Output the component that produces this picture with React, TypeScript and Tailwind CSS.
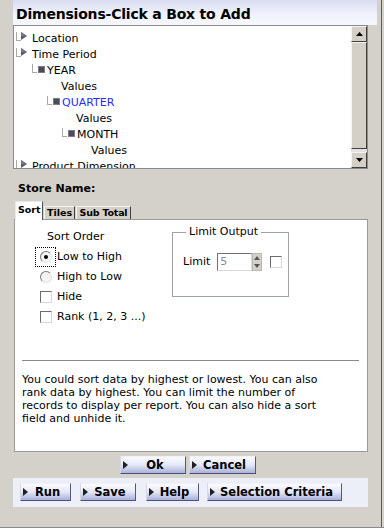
import type { ReactNode } from 'react';

type TreeRow = {
  text: string;
  pad: string;
  icon: 'tri' | 'sq' | 'none';
  blue?: boolean;
};

const rows: TreeRow[] = [
  { text: 'Location', pad: 'pl-[2px]', icon: 'tri' },
  { text: 'Time Period', pad: 'pl-[2px]', icon: 'tri' },
  { text: 'YEAR', pad: 'pl-[18px]', icon: 'sq' },
  { text: 'Values', pad: 'pl-[47px]', icon: 'none' },
  { text: 'QUARTER', pad: 'pl-[33px]', icon: 'sq', blue: true },
  { text: 'Values', pad: 'pl-[62px]', icon: 'none' },
  { text: 'MONTH', pad: 'pl-[48px]', icon: 'sq' },
  { text: 'Values', pad: 'pl-[77px]', icon: 'none' },
  { text: 'Product Dimension', pad: 'pl-[2px]', icon: 'tri' }
];

function Tri() {
  return (
    <svg width="7" height="8" viewBox="0 0 7 8" className="shrink-0">
      <polygon points="0,0 6,4 0,8" fill="#5c5c66" />
      <polygon points="0,0 6,4 0,4" fill="#7a7a86" />
    </svg>
  );
}

function Btn({ label, w }: { label: string; w: string }) {
  return (
    <div
      className={`${w} h-[18px] flex items-center bg-gradient-to-b from-[#fbfbff] via-[#e4e7f6] to-[#a9b1d8] border border-t-[#f0f0f8] border-l-[#d8d8e4] border-r-[#55587a] border-b-[#4a5080]`}
    >
      <svg width="6" height="8" viewBox="0 0 6 8" className="ml-[2px] shrink-0">
        <polygon points="0,0 5,4 0,8" fill="#202020" />
      </svg>
      <span className="flex-1 text-center text-[11.5px] font-bold leading-[16px] text-black pr-[4px]">
        {label}
      </span>
    </div>
  );
}

function Check() {
  return (
    <div className="w-[12px] h-[12px] shrink-0 bg-white border border-t-[#6b6b6b] border-l-[#6b6b6b] border-r-[#d6d6d6] border-b-[#d6d6d6]" />
  );
}

function Radio({ on }: { on?: boolean }) {
  return (
    <div className="w-[12px] h-[12px] shrink-0 rounded-full bg-[#f4f4f4] border border-t-[#7a7a7a] border-l-[#7a7a7a] border-r-[#e4e4e4] border-b-[#e4e4e4] flex items-center justify-center">
      {on && <div className="w-[4px] h-[4px] rounded-full bg-black" />}
    </div>
  );
}

function Option({ children }: { children: ReactNode }) {
  return <div className="h-[20px] flex items-center">{children}</div>;
}

function ScrollBtn({ up }: { up?: boolean }) {
  return (
    <div className="h-[16px] w-[16px] bg-[#d4d0c8] border border-t-[#f4f4f4] border-l-[#f4f4f4] border-r-[#404040] border-b-[#404040] flex items-center justify-center">
      <svg width="7" height="4" viewBox="0 0 7 4">
        {up ? <polygon points="3.5,0 7,4 0,4" fill="#000" /> : <polygon points="0,0 7,0 3.5,4" fill="#000" />}
      </svg>
    </div>
  );
}

export default function App() {
  return (
    <div className="w-[384px] h-[528px] bg-[#d3d1ca] flex overflow-hidden border-b border-[#8a8a8a] font-['DejaVu_Sans',Verdana,sans-serif] text-black">
      <div className="w-[381px] pl-[13px]">
        <div className="h-[25px] w-[364px] bg-gradient-to-b from-[#d8dcee] via-[#eef0fc] to-[#f6f7ff] pl-[3px] pt-[2px]">
          <span className="text-[14px] font-bold leading-[20px] tracking-[-0.2px]">
            Dimensions-Click a Box to Add
          </span>
        </div>

        <div className="w-[355px] h-[144px] bg-white border border-[#8c8c8c] flex">
          <div className="flex-1 pt-[5px] overflow-hidden">
            {rows.map((r, i) => (
              <div key={i} className={`h-[16px] flex items-center ${r.pad}`}>
                {r.icon !== 'none' && (
                  <div className="w-[5px] h-[9px] shrink-0 border-l border-b border-[#a8a8a8] self-start mt-[1px]" />
                )}
                {r.icon === 'tri' && (
                  <div className="self-start mt-[1px]">
                    <Tri />
                  </div>
                )}
                {r.icon === 'sq' && (
                  <div className="ml-[1px] w-[7px] h-[7px] bg-[#4c4c58] border border-[#7c7c88] shrink-0 -mt-[3px]" />
                )}
                <span
                  className={`text-[11px] leading-[16px] whitespace-nowrap ${
                    r.icon === 'tri' ? 'ml-[4px]' : r.icon === 'sq' ? 'ml-[2px]' : ''
                  } ${r.blue ? 'text-[#2a2aff]' : 'text-black'}`}
                >
                  {r.text}
                </span>
              </div>
            ))}
          </div>
          <div className="w-[16px] flex flex-col bg-[#e4e2dc]">
            <ScrollBtn up />
            <div className="h-[107px] bg-[#d4d0c8] border border-t-[#f4f4f4] border-l-[#f4f4f4] border-r-[#404040] border-b-[#404040]" />
            <div className="flex-1" />
            <ScrollBtn />
          </div>
        </div>

        <div className="mt-[13px] pl-[5px] h-[14px] text-[11px] font-bold leading-[14px]">Store Name:</div>

        <div className="mt-[5px] pl-[2px] h-[18px] flex items-end relative z-10">
          <div className="w-[28px] h-[19px] -mb-px bg-white border-t border-l border-r border-t-[#e8e8e8] border-l-[#e8e8e8] border-r-[#505050] pl-[2px] text-[9.5px] font-bold leading-[15px]">
            Sort
          </div>
          <div className="ml-px w-[31px] h-[13px] bg-[#d4d0c8] border-t border-l border-r border-t-[#f4f4f4] border-l-[#f4f4f4] border-r-[#404040] text-[9.5px] font-bold leading-[12px] text-center">
            Tiles
          </div>
          <div className="ml-px w-[55px] h-[13px] bg-[#d4d0c8] border-t border-l border-r border-t-[#f4f4f4] border-l-[#f4f4f4] border-r-[#404040] text-[9.5px] font-bold leading-[12px] text-center tracking-[-0.2px]">
            Sub Total
          </div>
        </div>

        <div className="ml-px w-[354px] h-[233px] bg-white border border-[#9a9a9a]">
          <div className="h-[140px] flex">
            <div className="w-[157px] pt-[7px] text-[11px]">
              <div className="h-[20px] flex items-center pl-[32px]">Sort Order</div>
              <Option>
                <div className="ml-[20px] w-[21px] h-[20px] border border-dotted border-black flex items-center justify-center">
                  <Radio on />
                </div>
                <span className="ml-px">Low to High</span>
              </Option>
              <Option>
                <div className="ml-[25px]">
                  <Radio />
                </div>
                <span className="ml-[5px]">High to Low</span>
              </Option>
              <Option>
                <div className="ml-[25px]">
                  <Check />
                </div>
                <span className="ml-[5px]">Hide</span>
              </Option>
              <Option>
                <div className="ml-[25px]">
                  <Check />
                </div>
                <span className="ml-[5px]">Rank (1, 2, 3 ...)</span>
              </Option>
            </div>

            <fieldset className="mt-[5px] w-[117px] h-[72px] border border-[#a0a4a0] text-[11px]">
              <legend className="ml-[13px] px-[3px] leading-[14px]">Limit Output</legend>
              <div className="mt-[14px] pl-[10px] flex items-center">
                <span>Limit</span>
                <div className="ml-[7px] w-[35px] h-[18px] border border-t-[#707070] border-l-[#707070] border-r-[#d8d8d8] border-b-[#d8d8d8] pl-[2px] text-[#8a8a8a] leading-[16px]">
                  5
                </div>
                <div className="w-[10px] h-[18px] flex flex-col bg-[#d4d0c8] border border-[#b8b8b8]">
                  <div className="flex-1 flex items-center justify-center">
                    <svg width="6" height="4" viewBox="0 0 6 4">
                      <polygon points="3,0 6,4 0,4" fill="#555" />
                    </svg>
                  </div>
                  <div className="flex-1 flex items-center justify-center">
                    <svg width="6" height="4" viewBox="0 0 6 4">
                      <polygon points="0,0 6,0 3,4" fill="#555" />
                    </svg>
                  </div>
                </div>
                <div className="ml-[8px]">
                  <Check />
                </div>
              </div>
            </fieldset>
          </div>

          <div className="ml-[7px] w-[337px] border-t border-[#8a8a8a]" />

          <p className="mt-[12px] ml-[7px] text-[11px] leading-[13px] whitespace-nowrap">
            You could sort data by highest or lowest. You can also
            <br />
            rank data by highest. You can limit the number of
            <br />
            records to display per report. You can also hide a sort
            <br />
            field and unhide it.
          </p>
        </div>

        <div className="mt-[4px] flex pl-[107px]">
          <Btn label="Ok" w="w-[66px]" />
          <div className="ml-[3px]">
            <Btn label="Cancel" w="w-[67px]" />
          </div>
        </div>

        <div className="mt-[4px] w-[355px] h-[29px] bg-[#eceef8] pt-[5px] pl-[7px] flex items-start">
          <Btn label="Run" w="w-[51px]" />
          <div className="ml-[9px]">
            <Btn label="Save" w="w-[56px]" />
          </div>
          <div className="ml-[10px]">
            <Btn label="Help" w="w-[53px]" />
          </div>
          <div className="ml-[8px]">
            <Btn label="Selection Criteria" w="w-[135px]" />
          </div>
        </div>
      </div>
      <div className="w-px bg-[#5e5e5e]" />
    </div>
  );
}
